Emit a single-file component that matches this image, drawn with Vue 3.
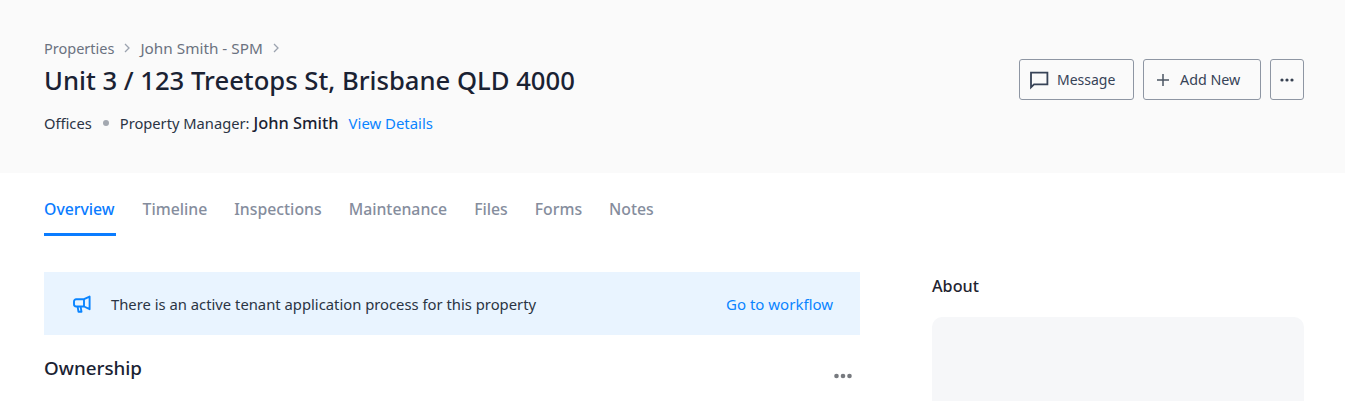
<script setup>
const tabs = ['Overview', 'Timeline', 'Inspections', 'Maintenance', 'Files', 'Forms', 'Notes']
</script>

<template>
  <div class="page">
    <header class="head">
      <div class="head-left">
        <nav class="crumbs">
          <span>Properties</span>
          <svg class="chev" width="8" height="10" viewBox="0 0 8 10"><path d="M2 1l4 4-4 4" fill="none" stroke="#9ca3af" stroke-width="1.3"/></svg>
          <span class="crumb-name">John Smith - SPM</span>
          <svg class="chev" width="8" height="10" viewBox="0 0 8 10"><path d="M2 1l4 4-4 4" fill="none" stroke="#9ca3af" stroke-width="1.3"/></svg>
        </nav>
        <h1 class="title">Unit 3 / 123 Treetops St, Brisbane QLD 4000</h1>
        <div class="meta">
          <span>Offices</span>
          <i class="dot"></i>
          <span>Property Manager:</span>
          <b class="mgr">John Smith</b>
          <a class="link details">View Details</a>
        </div>
      </div>
      <div class="actions">
        <button class="btn msg">
          <svg width="20" height="20" viewBox="0 0 20 20"><path d="M2 17.4V2.6h16.4v11.8H5z" fill="none" stroke="#374357" stroke-width="1.8"/></svg>
          <span>Message</span>
        </button>
        <button class="btn add">
          <svg width="14" height="14" viewBox="0 0 14 14"><path d="M7 1v12M1 7h12" fill="none" stroke="#4b5563" stroke-width="1.5"/></svg>
          <span>Add New</span>
        </button>
        <button class="btn more">
          <svg width="14" height="4" viewBox="0 0 14 4"><circle cx="2" cy="2" r="1.6" fill="#374151"/><circle cx="7" cy="2" r="1.6" fill="#374151"/><circle cx="12" cy="2" r="1.6" fill="#374151"/></svg>
        </button>
      </div>
    </header>

    <nav class="tabs">
      <a v-for="(t, i) in tabs" :key="t" class="tab" :class="{ active: i === 0 }">{{ t }}</a>
    </nav>

    <main class="body">
      <section class="main">
        <div class="banner">
          <svg class="mega" width="20" height="20" viewBox="0 0 20 20" fill="none" stroke="#0a84ff" stroke-width="1.9" stroke-linejoin="round">
            <path d="M17.6 2.6v12.6l-5.6-2.7H4.2a2.2 2.2 0 0 1-2.2-2.2V7.4a2.2 2.2 0 0 1 2.2-2.2H12z"/>
            <path d="M12 5.2v7.3"/>
            <path d="M5.6 12.6l.9 5.2h3l-.9-5.2"/>
          </svg>
          <span class="banner-text">There is an active tenant application process for this property</span>
          <a class="link workflow">Go to workflow</a>
        </div>
        <div class="own">
          <h2 class="own-title">Ownership</h2>
          <svg class="own-more" width="20" height="6" viewBox="0 0 20 6"><circle cx="3.5" cy="3" r="2.3" fill="#777a7f"/><circle cx="10" cy="3" r="2.3" fill="#777a7f"/><circle cx="16.5" cy="3" r="2.3" fill="#777a7f"/></svg>
        </div>
      </section>
      <aside class="side">
        <h3 class="about">About</h3>
        <div class="panel"></div>
      </aside>
    </main>
  </div>
</template>

<style>
html, body { margin: 0; background: #fff; overflow: hidden; }
</style>

<style scoped>
.page { width: 1345px; height: 401px; overflow: hidden; font-family: "Noto Sans", "Open Sans", sans-serif; color: #1f2937; }
.head { height: 173px; box-sizing: border-box; background: #fafafa; padding: 38px 41px 0 44px; display: flex; justify-content: space-between; }
.crumbs { display: flex; align-items: center; gap: 9px; font-size: 14.5px; line-height: 20px; color: #6b7280; }
.crumb-name { font-size: 15.3px; }
.title { margin: 5px 0 0; font-size: 25.65px; line-height: 36px; font-weight: 500; color: #1a2233; }
.meta { display: flex; align-items: center; margin-top: 14px; font-size: 14.7px; line-height: 20px; color: #2b3444; }
.dot { width: 6px; height: 6px; border-radius: 50%; background: #a3a8b0; margin: 0 11px 0 11px; }
.mgr { font-weight: 500; color: #1a2233; margin-left: 4px; font-size: 16.4px; }
.link { color: #0a84ff; }
.details { margin-left: 10px; font-size: 14.9px; }
.actions { display: flex; gap: 9px; margin-top: 21px; align-items: flex-start; }
.btn { height: 41px; box-sizing: border-box; display: flex; align-items: center; background: transparent; border: 1px solid #8e96a3; border-radius: 3px; font: inherit; font-size: 14px; color: #374357; padding: 0; }
.msg { width: 115px; padding-left: 9px; gap: 8px; }
.add { width: 118px; padding-left: 12px; gap: 10px; font-size: 14.3px; }
.more { width: 34px; justify-content: center; }
.tabs { display: flex; gap: 27px; padding: 26px 0 0 44px; height: 63px; box-sizing: content-box; }
.tab { font-size: 15.8px; line-height: 20px; font-weight: 500; color: #858d9d; height: 37px; box-sizing: border-box; }
.tab.active { color: #0a7cff; border-bottom: 3px solid #0a7cff; min-width: 71.6px; }
.body { display: flex; padding: 36px 41px 0 44px; gap: 72px; margin-top: -26px; }
.main { width: 816px; flex: none; }
.banner { height: 63px; background: #e9f4ff; display: flex; align-items: center; padding: 0 27px 0 28px; font-size: 14.8px; color: #2b3444; }
.banner-text { margin-left: 19px; flex: 1; }
.workflow { font-size: 15px; }
.own { display: flex; justify-content: space-between; margin-top: 20px; }
.own-title { margin: 0; font-size: 18.8px; line-height: 26px; font-weight: 500; color: #1a2233; }
.own-more { margin: 18px 7px 0 0; }
.side { flex: 1; }
.about { margin: 0; font-size: 16.2px; line-height: 28px; font-weight: 500; color: #1f2430; }
.panel { margin-top: 17px; height: 120px; background: #f6f7f9; border-radius: 10px; }
</style>
